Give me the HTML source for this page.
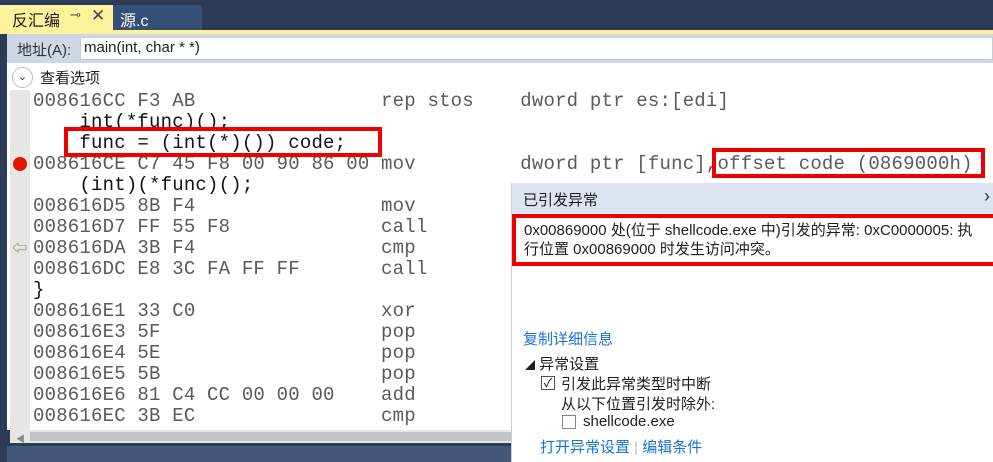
<!DOCTYPE html>
<html><head><meta charset="utf-8"><style>
*{margin:0;padding:0;box-sizing:border-box}
body{width:993px;height:462px;overflow:hidden;background:#2b3b58;font-family:"Liberation Sans","Noto Sans CJK SC",sans-serif;position:relative}
.abs{position:absolute}
.code{font-family:"Liberation Mono",monospace;font-size:19px;line-height:21px;letter-spacing:0.2px;color:#5a5a5a;white-space:pre}
.src{color:#111}
.red{border:4px solid #e00;position:absolute}
.cj{font-size:14px;color:#1e1e1e}
.link{color:#1a73d0;font-size:14px}
</style></head><body>
<div class="abs" style="left:0;top:5px;width:113px;height:26px;background:#fff29d"></div>
<div class="abs cj" style="left:12px;top:7px;font-size:16px">反汇编</div>
<div class="abs" style="left:70px;top:7px;font-size:13px;color:#555">⊸</div>
<div class="abs" style="left:91px;top:6px;font-size:17px;color:#444">✕</div>
<div class="abs" style="left:113px;top:5px;width:89px;height:26px;background:#364f75"></div>
<div class="abs" style="left:120px;top:7px;font-size:16px;color:#fff">源.c</div>
<div class="abs" style="left:0;top:30px;width:993px;height:4px;background:#fff29d"></div>
<div class="abs" style="left:7px;top:34px;width:986px;height:29px;background:#cfd6e5"></div>
<div class="abs cj" style="left:17px;top:39px;color:#333;font-size:15px">地址(A):</div>
<div class="abs" style="left:80px;top:37px;width:913px;height:23px;background:#fff;border:1px solid #c6cbd6"></div>
<div class="abs cj" style="left:84px;top:39px;font-size:15px">main(int, char * *)</div>
<div class="abs" style="left:7px;top:63px;width:986px;height:367px;background:#fff"></div>
<div class="abs" style="left:12px;top:67px;width:21px;height:21px;border:1px solid #bbb;border-radius:50%;text-align:center;font-size:11px;line-height:19px;color:#234">⌄</div>
<div class="abs cj" style="left:40px;top:67px;font-size:15px">查看选项</div>
<div class="abs" style="left:10px;top:90px;width:20px;height:340px;background:#e6e6e6"></div>
<div class="abs code" style="left:33px;top:91px">008616CC F3 AB                rep stos    dword ptr es:[edi]
<span class="src">    int(*func)();
    func = (int(*)()) code;</span>
008616CE C7 45 F8 00 90 86 00 mov         dword ptr [func],offset code (0869000h)
<span class="src">    (int)(*func)();</span>
008616D5 8B F4                mov
008616D7 FF 55 F8             call
008616DA 3B F4                cmp
008616DC E8 3C FA FF FF       call
<span class="src">}</span>
008616E1 33 C0                xor
008616E3 5F                   pop
008616E4 5E                   pop
008616E5 5B                   pop
008616E6 81 C4 CC 00 00 00    add
008616EC 3B EC                cmp</div>
<div class="abs" style="left:13px;top:157px;width:14px;height:14px;border-radius:50%;background:#e51400"></div>
<div class="abs" style="left:12px;top:237px;font-size:15px;color:#6a8a5a">⇦</div>
<div class="red" style="left:64px;top:127px;width:318px;height:30px"></div>
<div class="red" style="left:712px;top:148px;width:273px;height:30px"></div>
<div class="abs" style="left:10px;top:430px;width:501px;height:13px;background:#e6e6e6"></div>
<div class="abs" style="left:30px;top:432px;width:481px;height:9px;background:#c2c3c9"></div>
<div class="abs" style="left:16px;top:432px;font-size:9px;color:#888">◀</div>
<div class="abs" style="left:7px;top:446px;width:504px;height:16px;background:#44587a"></div>
<div class="abs" style="left:511px;top:183px;width:482px;height:279px;background:#fff;border-left:1px solid #ccd"></div>
<div class="abs" style="left:512px;top:183px;width:481px;height:30px;background:#dde3ef"></div>
<div class="abs cj" style="left:523px;top:189px;font-size:15px">已引发异常</div>
<div class="abs" style="left:984px;top:186px;font-size:18px;color:#333">›</div>
<div class="red" style="left:512px;top:214px;width:481px;height:52px;border-right:none"></div>
<div class="abs cj" style="left:524px;top:221px;line-height:19px;font-size:15px;white-space:nowrap">0x00869000 处(位于 shellcode.exe 中)引发的异常: 0xC0000005: 执<br>行位置 0x00869000 时发生访问冲突。</div>
<div class="abs link" style="left:523px;top:328px;font-size:15px">复制详细信息</div>
<div class="abs cj" style="left:525px;top:353px;font-size:15px"><span style="font-size:10px">◢</span> 异常设置</div>
<div class="abs" style="left:541px;top:376px;width:14px;height:14px;border:1px solid #555;font-size:12px;line-height:12px;text-align:center">✓</div>
<div class="abs cj" style="left:561px;top:373px;font-size:15px">引发此异常类型时中断</div>
<div class="abs cj" style="left:561px;top:393px;font-size:15px">从以下位置引发时除外:</div>
<div class="abs" style="left:562px;top:415px;width:14px;height:14px;border:1px solid #888"></div>
<div class="abs cj" style="left:583px;top:413px;font-size:15px">shellcode.exe</div>
<div class="abs link" style="left:540px;top:436px;font-size:15px">打开异常设置 <span style="color:#bbb">|</span> 编辑条件</div>
</body></html>
